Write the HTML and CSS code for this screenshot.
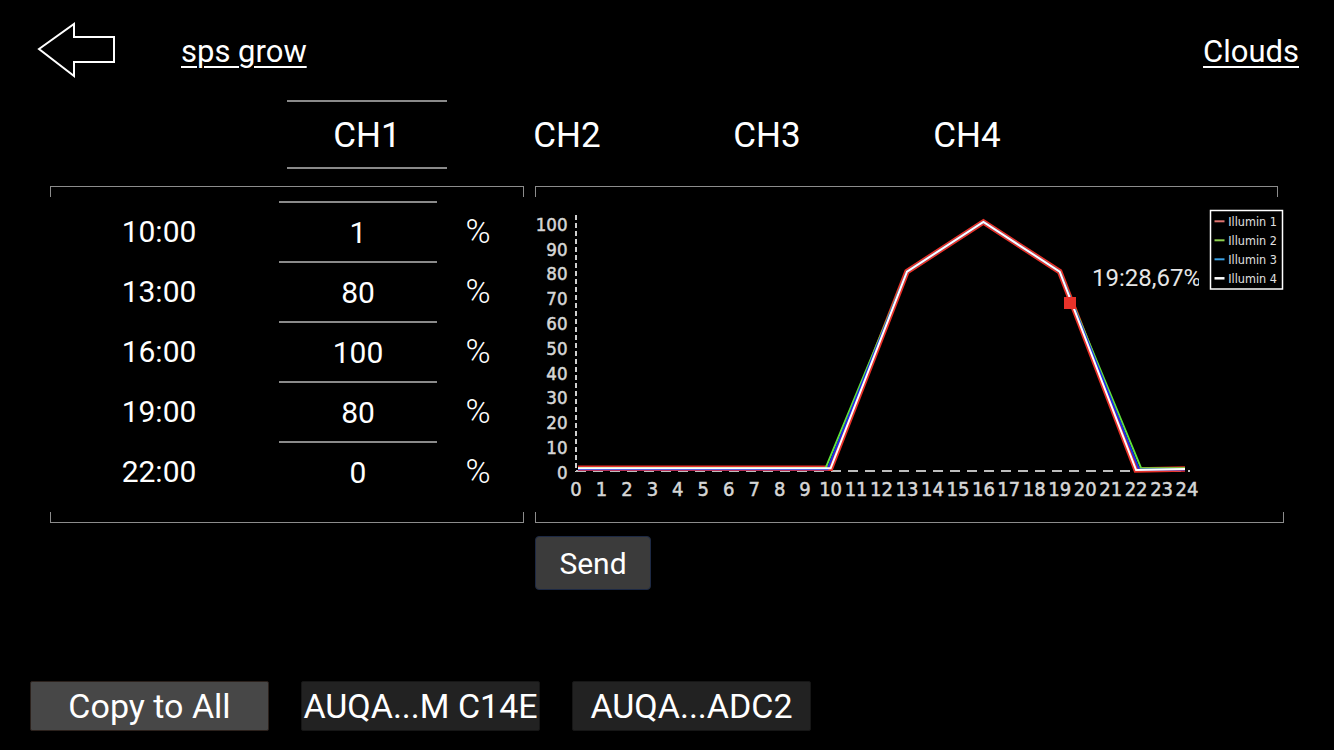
FILE: index.html
```html
<!DOCTYPE html>
<html lang="en">
<head>
  <meta charset="UTF-8">
  <meta name="viewport" content="width=device-width, initial-scale=1.0">
  <title>sps grow</title>
  <link rel="stylesheet" href="styles.css">
</head>
<body>
  <div class="screen">
    <header class="topbar">
      <svg class="back" width="82" height="60" viewBox="0 0 82 60">
        <polygon points="5,29 40,4 40,17 80,17 80,42 40,42 40,56" fill="none" stroke="#fff" stroke-width="2" stroke-linejoin="miter"/>
      </svg>
      <a class="title">sps grow</a>
      <a class="clouds">Clouds</a>
    </header>

    <nav class="tabs">
      <div class="tab active">CH1</div>
      <div class="tab">CH2</div>
      <div class="tab">CH3</div>
      <div class="tab">CH4</div>
    </nav>

    <main class="workspace">
      <section class="panel schedule">
        <div class="row"><span class="time">10:00</span><span class="value">1</span><span class="unit">%</span></div>
        <div class="row"><span class="time">13:00</span><span class="value">80</span><span class="unit">%</span></div>
        <div class="row"><span class="time">16:00</span><span class="value">100</span><span class="unit">%</span></div>
        <div class="row"><span class="time">19:00</span><span class="value">80</span><span class="unit">%</span></div>
        <div class="row"><span class="time">22:00</span><span class="value">0</span><span class="unit">%</span></div>
      </section>

      <section class="panel chart">
        <svg width="749" height="336" viewBox="0 0 749 336">
          <defs>
            <clipPath id="tipClip"><rect x="0" y="0" width="664" height="336"/></clipPath>
          </defs>

          <g class="axis-y">
            <text x="32.5" y="44.8">100</text>
            <text x="32.5" y="69.6">90</text>
            <text x="32.5" y="94.4">80</text>
            <text x="32.5" y="119.2">70</text>
            <text x="32.5" y="144">60</text>
            <text x="32.5" y="168.8">50</text>
            <text x="32.5" y="193.6">40</text>
            <text x="32.5" y="218.4">30</text>
            <text x="32.5" y="243.2">20</text>
            <text x="32.5" y="268">10</text>
            <text x="32.5" y="292.8">0</text>
          </g>
          <line x1="41" y1="29" x2="41" y2="286" stroke="#cfcfcf" stroke-width="2" stroke-dasharray="5 3"/>
          <line x1="41" y1="285" x2="655" y2="285" stroke="#bdbdbd" stroke-width="2" stroke-dasharray="10 7"/>

          <g class="axis-x">
            <text x="41" y="309.5">0</text>
            <text x="66.5" y="309.5">1</text>
            <text x="91.9" y="309.5">2</text>
            <text x="117.4" y="309.5">3</text>
            <text x="142.8" y="309.5">4</text>
            <text x="168.3" y="309.5">5</text>
            <text x="193.8" y="309.5">6</text>
            <text x="219.2" y="309.5">7</text>
            <text x="244.7" y="309.5">8</text>
            <text x="270.1" y="309.5">9</text>
            <text x="295.6" y="309.5">10</text>
            <text x="321.1" y="309.5">11</text>
            <text x="346.5" y="309.5">12</text>
            <text x="372" y="309.5">13</text>
            <text x="397.4" y="309.5">14</text>
            <text x="422.9" y="309.5">15</text>
            <text x="448.4" y="309.5">16</text>
            <text x="473.8" y="309.5">17</text>
            <text x="499.3" y="309.5">18</text>
            <text x="524.7" y="309.5">19</text>
            <text x="550.2" y="309.5">20</text>
            <text x="575.7" y="309.5">21</text>
            <text x="601.1" y="309.5">22</text>
            <text x="626.6" y="309.5">23</text>
            <text x="652" y="309.5">24</text>
          </g>

          <g class="series" fill="none" stroke-linejoin="miter">
            <polyline points="43,282.3 295.6,282.3 372,85.6 448.4,36 524.7,85.6 601.1,284 650,283" stroke="#e8322a" stroke-width="5.5"/>
            <polyline points="43,282.3 290.5,282.3 372,85.6 448.4,36 524.7,85.6 606.2,282.3 650,282.3" stroke="#5fe23a" stroke-width="2"/>
            <polyline points="43,283.3 292.5,283.3 372,85.6 448.4,36 524.7,85.6 604.2,283.6 650,283.6" stroke="#1c2ee6" stroke-width="2"/>
            <polyline points="43,282.3 295.6,282.3 372,85.6 448.4,36 524.7,85.6 601.1,284 650,283" stroke="#ffffff" stroke-width="2"/>
          </g>

          <rect x="529" y="111" width="12" height="12" fill="#e8322a"/>
          <text class="tip" x="557" y="100" clip-path="url(#tipClip)">19:28,67%</text>

          <g class="legend">
            <rect x="675.5" y="24.5" width="72" height="78.5" fill="#000" stroke="#fff" stroke-width="1.5"/>
            <line x1="679.5" y1="35.3" x2="689.5" y2="35.3" stroke="#e07470" stroke-width="2"/>
            <line x1="679.5" y1="54.3" x2="689.5" y2="54.3" stroke="#8fd14f" stroke-width="2"/>
            <line x1="679.5" y1="73.3" x2="689.5" y2="73.3" stroke="#3ba3e6" stroke-width="2"/>
            <line x1="679.5" y1="92.3" x2="689.5" y2="92.3" stroke="#fff" stroke-width="2.5"/>
            <text x="693.3" y="39.8">Illumin 1</text>
            <text x="693.3" y="58.8">Illumin 2</text>
            <text x="693.3" y="77.8">Illumin 3</text>
            <text x="693.3" y="96.8">Illumin 4</text>
          </g>
        </svg>
      </section>

      <button class="send">Send</button>
    </main>

    <footer class="devices">
      <button class="device copy">Copy to All</button>
      <button class="device">AUQA...M C14E</button>
      <button class="device">AUQA...ADC2</button>
    </footer>
  </div>
</body>
</html>
```

FILE: styles.css
```css
body { margin: 0; background: #000; color: #fff; font-family: Roboto, "Liberation Sans", sans-serif; }
.screen { width: 1334px; height: 750px; overflow: hidden; }

.topbar { display: flex; align-items: center; height: 100px; padding: 0 35px 0 34px; box-sizing: border-box; }
.back { display: block; }
.title, .clouds { font-size: 31px; line-height: 1; padding-top: 3px; text-decoration: underline; text-decoration-thickness: 2px; text-underline-offset: 4px; }
.title { margin-left: 65px; }
.clouds { margin-left: auto; }

.tabs { display: flex; gap: 40px; padding-left: 287px; }
.tab { width: 160px; height: 69px; box-sizing: border-box; padding-top: 3px; border-top: 2px solid transparent; border-bottom: 2px solid transparent; font-size: 35px; line-height: 62px; text-align: center; }
.tab.active { border-color: #8a8a8a; }

.workspace { display: grid; grid-template-columns: 474px 749px; column-gap: 11px; row-gap: 13px; margin-top: 17px; padding-left: 50px; }
.panel { position: relative; height: 337px; box-sizing: border-box; }
.panel::before, .panel::after { content: ""; position: absolute; left: 0; right: 0; height: 10px; border: 1px solid #8c8c8c; }
.panel::before { top: 0; border-bottom: none; }
.panel::after { bottom: 0; border-top: none; }
.chart::before { right: 6px; }
.chart svg { display: block; }

.schedule { padding-top: 15px; }
.row { display: grid; grid-template-columns: 218px 158px 60px; column-gap: 11px; height: 60px; font-size: 30px; }
.row span { display: flex; align-items: center; justify-content: center; }
.row .value { border-top: 2px solid #8a8a8a; }
.row .unit { font-size: 34px; font-weight: 300; }

.axis-y text, .axis-x text { font-family: "DejaVu Sans Condensed", "DejaVu Sans", sans-serif; font-size: 20px; fill: #d6d6d6; stroke: #d6d6d6; stroke-width: 0.5; }
.axis-y text { text-anchor: end; font-size: 18.5px; }
.axis-x text { text-anchor: middle; }
.tip { font-family: Roboto, sans-serif; font-size: 24px; fill: #e6e6e6; }
.legend text { font-family: "DejaVu Sans Condensed", "DejaVu Sans", sans-serif; font-size: 12.5px; fill: #e0e0e0; }

.send { grid-column: 2; justify-self: start; width: 116px; height: 54px; background: #3b3b3b; color: #fff; border: 1px solid #1d2944; border-radius: 4px; font-family: Roboto, sans-serif; font-size: 30px; padding: 0; }

.devices { display: flex; gap: 32px; margin-top: 91px; padding-left: 30px; }
.device { width: 239px; height: 50px; padding: 0; background: #222; color: #fff; border: 1px solid #161616; border-radius: 2px; font-family: Roboto, sans-serif; font-size: 34px; white-space: nowrap; overflow: hidden; }
.device.copy { background: #474747; border-color: #2b211c; }
```
